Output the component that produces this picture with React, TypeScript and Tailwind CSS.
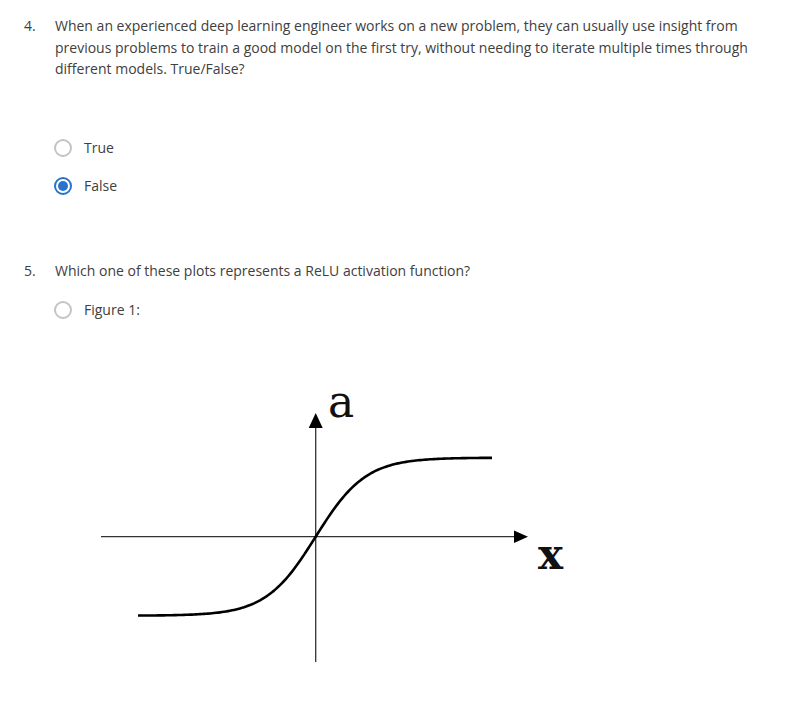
import { FC } from "react";

const font = { fontFamily: '"Open Sans", "Liberation Sans", sans-serif' };

const Radio: FC<{ checked?: boolean; label: string }> = ({ checked, label }) => (
  <div className="flex items-center h-[22px]">
    {checked ? (
      <span className="w-[18px] h-[18px] rounded-full border-2 border-[#2a73cc] flex items-center justify-center">
        <span className="w-[10px] h-[10px] rounded-full bg-[#2a73cc]" />
      </span>
    ) : (
      <span className="w-[18px] h-[18px] rounded-full border-2 border-[#c4c4c4]" />
    )}
    <span className="ml-[12px] text-[14px] leading-[22px] text-[#404040]">{label}</span>
  </div>
);

// sigmoid drawn as points in the figure's own coordinates
const sigmoid = () => {
  const pts: string[] = [];
  for (let x = 58; x <= 413; x += 2) {
    const y = 166.7 - 79 * Math.tanh(0.02 * (x - 235.7));
    pts.push(`${x},${y.toFixed(2)}`);
  }
  return pts.join(" ");
};

const Figure: FC = () => (
  <svg width="500" height="310" viewBox="0 0 500 310" className="block">
    <line x1="21" y1="166.7" x2="436" y2="166.7" stroke="#333" strokeWidth="1.3" />
    <polygon points="448,166.7 434,160.5 434,172.9" fill="#000" />
    <line x1="235.7" y1="292" x2="235.7" y2="56" stroke="#333" strokeWidth="1.3" />
    <polygon points="235.7,43 228.7,58 242.7,58" fill="#000" />
    <polyline points={sigmoid()} fill="none" stroke="#000" strokeWidth="2.6" strokeLinejoin="round" />
    <text x="248" y="46.5" fontSize="44" fontFamily='"DejaVu Serif", "Liberation Serif", serif' fill="#111">
      a
    </text>
    <text x="458" y="199" fontSize="42" fontFamily='"DejaVu Serif", "Liberation Serif", serif' fontWeight="bold" fill="#111">
      x
    </text>
  </svg>
);

const App: FC = () => {
  return (
    <div className="w-[804px] h-[716px] bg-white pt-[15px] pl-[24px]" style={font}>
      <div className="flex text-[14px] leading-[21.5px] text-[#404040]">
        <span className="w-[31px] shrink-0">4.</span>
        <p className="w-[705px]">
          When an experienced deep learning engineer works on a new problem, they can usually use insight from
          previous problems to train a good model on the first try, without needing to iterate multiple times through
          different models. True/False?
        </p>
      </div>
      <div className="ml-[30px] mt-[57.5px] flex flex-col gap-[16px]">
        <Radio label="True" />
        <Radio checked label="False" />
      </div>

      <div className="mt-[63px] flex text-[14px] leading-[21.5px] text-[#404040]">
        <span className="w-[31px] shrink-0">5.</span>
        <p>Which one of these plots represents a ReLU activation function?</p>
      </div>
      <div className="ml-[30px] mt-[17px]">
        <Radio label="Figure 1:" />
      </div>
      <div className="ml-[56px] mt-[49px]">
        <Figure />
      </div>
    </div>
  );
};

export default App;
